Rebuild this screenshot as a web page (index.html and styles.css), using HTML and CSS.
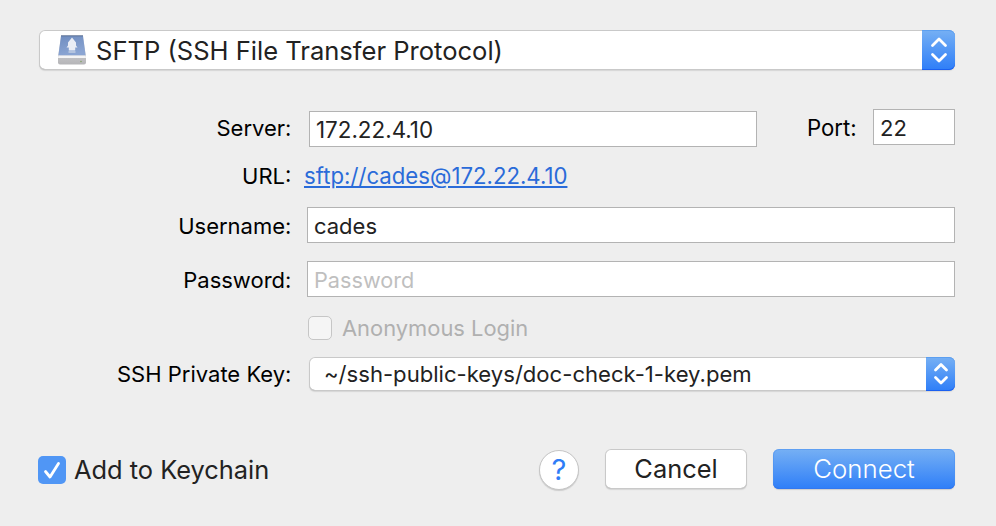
FILE: index.html
```html
<!DOCTYPE html>
<html lang="en"><head><meta charset="utf-8"><title>Open Connection</title><link rel="stylesheet" href="styles.css"></head>
<body>
<main class="dialog">
  <div class="select protocol">
    <svg class="drive" width="28" height="30" viewBox="0 0 28 30"><defs><linearGradient id="disk" x1="0" y1="0" x2="0.3" y2="1"><stop stop-color="#6f8dc0"/><stop offset="1" stop-color="#8ba5d3"/></linearGradient><linearGradient id="front" x1="0" y1="0" x2="0" y2="1"><stop stop-color="#e2e2e4"/><stop offset="1" stop-color="#b5b5b8"/></linearGradient></defs><path d="M3 1h22l3 21v5.500q0 2-2 2H2q-2 0-2-2V22z" fill="url(#front)"/><path d="M3 1h22l2.600 19.500H.4z" fill="url(#disk)"/><path d="M3 .8h22" stroke="#566b91"/><path d="M.3 20.500h27.400l.3 2.500H0z" fill="#f4f4f5"/><path d="M14 2.500l4 5v3l1.500 2h-2.300v3h-6.400v-3H8.500l1.500-2v-3z" fill="#e9edf5"/><path d="M10.500 17h7" stroke="#b4c4df" stroke-width="2"/><circle cx="23" cy="26.500" r=".8" fill="#83a264"/></svg>
    <span class="t-protocol">SFTP (SSH File Transfer Protocol)</span>
    <span class="stepper"><svg width="18" height="26" viewBox="0 0 18 26"><path d="M2.500 8.500L9 2l6.500 6.500M2.500 17.500L9 24l6.500-6.500"/></svg></span>
  </div>
  <div class="form">
    <div class="row server"><label class="label">Server:</label><div class="input host">172.22.4.10</div><label class="port-label">Port:</label><div class="input port">22</div></div>
    <div class="row url"><label class="label">URL:</label><a class="link" href="#">sftp://cades@172.22.4.10</a></div>
    <div class="row user"><label class="label">Username:</label><div class="input">cades</div></div>
    <div class="row pass"><label class="label">Password:</label><div class="input placeholder">Password</div></div>
    <div class="row anon"><span class="box"></span><span class="anon-text">Anonymous Login</span></div>
    <div class="row key"><label class="label">SSH Private Key:</label><div class="select small"><span class="t-key">~/ssh-public-keys/doc-check-1-key.pem</span><span class="stepper"><svg width="16" height="24" viewBox="0 0 16 24"><path d="M2.500 8L8 2.500 13.500 8M2.500 15.500L8 21l5.500-5.500"/></svg></span></div></div>
  </div>
  <footer class="footer"><span class="check"><svg width="28" height="28" viewBox="0 0 28 28"><path d="M7.500 15.500l4.500 5.500 8.500-13.500"/></svg></span><span class="keychain">Add to Keychain</span><button class="help">?</button><button class="button cancel">Cancel</button><button class="button connect">Connect</button></footer>
</main>
</body></html>
```
FILE: styles.css
```css
* { box-sizing: border-box; }
body { margin: 0; background: #eee; color: #000; font: 22px/30px "Inter", sans-serif; }
.dialog { width: 996px; height: 526px; padding: 30px 41px 0 39px; overflow: hidden; white-space: nowrap; }
.select { display: flex; align-items: center; color: #222; background: #fff; border-radius: 6px; box-shadow: inset 0 0 0 1px #c9c9c9, inset 0 -1px #b0b0b0, 0 1px 1px #d5d5d5; }
.protocol { height: 40px; padding-left: 19px; font-size: 25.55px; }
.t-protocol { padding-top: 1px; }
.drive { margin-right: 10px; }
.stepper { margin-left: auto; align-self: stretch; width: 33px; display: grid; place-items: center; background: linear-gradient(#76b0f4, #2e7ef8); border-radius: 0 6px 6px 0; box-shadow: inset 0 1px #5c9ff0, inset 0 -1px #1b60f0; }
.stepper path, .check path { fill: none; stroke: #fff; stroke-width: 2.8; stroke-linecap: round; stroke-linejoin: round; }
.form { height: 378px; padding-top: 39px; }
.row { display: flex; align-items: center; }
.label { width: 252.4px; margin-right: 15.6px; text-align: right; }
.input { flex: 1; height: 36px; padding: 3px 6px; color: #222; background: #fff; border: 1px solid #b3b3b3; }
.server { height: 38px; }
.host { flex: 0 0 448px; margin: 2px 0 0 2px; font-size: 22.4px; }
.port-label { margin-left: 50px; font-size: 22.2px; }
.port { flex: 0 0 82px; margin: -2px 0 0 auto; }
.url { height: 58px; margin-bottom: 2px; }
.link { margin-left: -3px; font-size: 22.2px; color: #2a6bd9; }
.user { height: 36px; }
.user .label, .pass .label { padding-top: 1px; }
.pass { height: 36px; margin-top: 18px; }
.placeholder { color: #bfbfbf; font-size: 21.7px; }
.anon { margin: 16px 0 14px 269px; color: #b0b0b0; font-size: 21.9px; }
.box { width: 24px; height: 24px; margin-right: 10px; border: 1px solid #c6c6c6; border-radius: 5px; background: #f5f5f5; }
.small { flex: 1; height: 34px; margin-left: 2px; padding-left: 15px; font-size: 22.1px; }
.small .stepper { width: 29px; }
.footer { display: flex; align-items: center; height: 42px; margin-left: -1px; font-size: 25.4px; color: #222; }
.check { width: 28px; height: 28px; margin-top: 2px; border-radius: 5px; background: #5096f5; }
.check svg { display: block; }
.keychain { margin-left: 8px; padding-top: 2px; }
button { border: 0; padding: 0; font: inherit; color: inherit; }
.help { width: 40px; height: 40px; margin: 1px 0 0 auto; border-radius: 50%; background: #fff; color: #2f7df7; font-size: 29px; border: 1px solid #c5c5c5; box-shadow: 0 1px 1px #ccc; }
.button { height: 40px; border-radius: 6px; background: #fff; box-shadow: inset 0 0 0 1px #c9c9c9, inset 0 -1px #b0b0b0, 0 1px 1px #d5d5d5; }
.cancel { width: 142px; margin: 0 26px; }
.connect { width: 182px; color: #fff; font-size: 25.8px; font-weight: 300; background: linear-gradient(#76b0f4, #2e7ef8); box-shadow: inset 0 0 0 1px #4a8ff080, inset 0 -1px #1b60f0, 0 1px 1px #ccc; }
```
